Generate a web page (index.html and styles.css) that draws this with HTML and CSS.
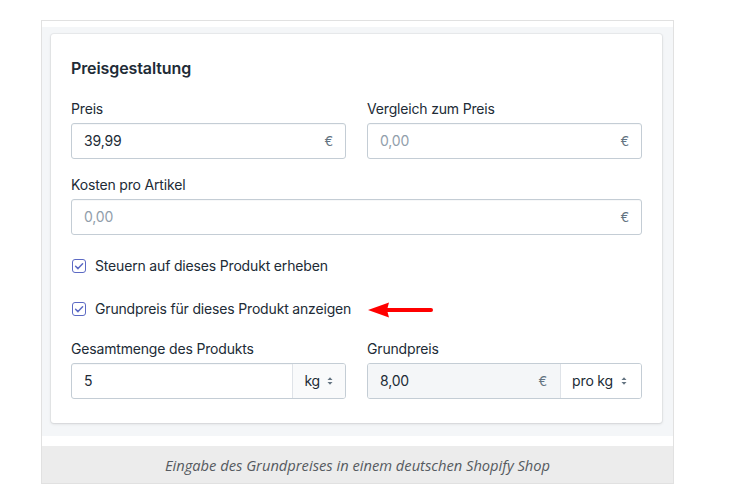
FILE: index.html
```html
<!DOCTYPE html>
<html lang="de">
<head>
<meta charset="utf-8">
<title>Preisgestaltung</title>
<link rel="stylesheet" href="styles.css">
</head>
<body>
<figure class="frame">
  <div class="stage">
    <section class="card">
      <h2 class="card-title">Preisgestaltung</h2>

      <div class="row two">
        <div class="field">
          <label class="label">Preis</label>
          <div class="input">
            <span class="value">39,99</span>
            <span class="suffix">€</span>
          </div>
        </div>
        <div class="field">
          <label class="label">Vergleich zum Preis</label>
          <div class="input">
            <span class="value placeholder">0,00</span>
            <span class="suffix">€</span>
          </div>
        </div>
      </div>

      <div class="row one gap-16">
        <div class="field">
          <label class="label">Kosten pro Artikel</label>
          <div class="input">
            <span class="value placeholder">0,00</span>
            <span class="suffix">€</span>
          </div>
        </div>
      </div>

      <div class="check first">
        <span class="box">
          <svg viewBox="0 0 14 14" width="14" height="14"><path d="M3.6 7.2l2.4 2.4 4.6-4.8" fill="none" stroke="#5c6ac4" stroke-width="1.5" stroke-linecap="round" stroke-linejoin="round"/></svg>
        </span>
        <span class="check-label">Steuern auf dieses Produkt erheben</span>
      </div>

      <div class="check second">
        <span class="box">
          <svg viewBox="0 0 14 14" width="14" height="14"><path d="M3.6 7.2l2.4 2.4 4.6-4.8" fill="none" stroke="#5c6ac4" stroke-width="1.5" stroke-linecap="round" stroke-linejoin="round"/></svg>
        </span>
        <span class="check-label">Grundpreis für dieses Produkt anzeigen</span>
      </div>

      <div class="row two gap-20">
        <div class="field">
          <label class="label">Gesamtmenge des Produkts</label>
          <div class="input joined">
            <span class="value">5</span>
            <span class="select tinted">kg
              <svg class="caret" viewBox="0 0 6 10" width="6" height="10"><path d="M0.5 4L3 1.3 5.5 4z M0.5 6L3 8.7 5.5 6z" fill="#637381"/></svg>
            </span>
          </div>
        </div>
        <div class="field">
          <label class="label">Grundpreis</label>
          <div class="input joined">
            <span class="value grey-part">8,00<span class="suffix">€</span></span>
            <span class="select wide">pro kg
              <svg class="caret" viewBox="0 0 6 10" width="6" height="10"><path d="M0.5 4L3 1.3 5.5 4z M0.5 6L3 8.7 5.5 6z" fill="#637381"/></svg>
            </span>
          </div>
        </div>
      </div>

      <svg class="arrow" viewBox="0 0 66 16" width="66" height="16">
        <line x1="18" y1="8" x2="63" y2="8" stroke="#ff0000" stroke-width="4" stroke-linecap="round"/>
        <polygon points="0,8 21,0.5 19,8 21,15.5" fill="#ff0000"/>
      </svg>
    </section>
  </div>
  <figcaption class="caption">Eingabe des Grundpreises in einem deutschen Shopify Shop</figcaption>
</figure>
</body>
</html>
```

FILE: styles.css
```css
html, body {
  margin: 0;
  padding: 0;
  background: #ffffff;
}

body {
  font-family: Inter, "Noto Sans", "Liberation Sans", sans-serif;
  color: #212b36;
  font-size: 14px;
  line-height: 20px;
  letter-spacing: -0.17px;
}

.frame {
  margin: 20px 0 0 41px;
  width: 633px;
  box-sizing: border-box;
  border: 1px solid #e1e1e1;
  padding-top: 6px;
  background: #ffffff;
}

.stage {
  background: #f4f6f8;
  padding: 7px 11px 13px 9px;
}

.card {
  position: relative;
  background: #ffffff;
  border-radius: 3px;
  box-shadow: 0 0 0 1px rgba(63, 63, 68, 0.05), 0 1px 3px 0 rgba(63, 63, 68, 0.15);
  padding: 22px 20px 24px 20px;
  height: 389px;
  box-sizing: border-box;
}

.card-title {
  margin: 0 0 19px 0;
  font-size: 16px;
  line-height: 24px;
  font-weight: 600;
  letter-spacing: -0.1px;
  color: #212b36;
}

.row {
  display: grid;
  column-gap: 21px;
}

.row.two {
  grid-template-columns: 1fr 1fr;
}

.row.one {
  grid-template-columns: 1fr;
}

.gap-16 {
  margin-top: 16px;
}

.gap-20 {
  margin-top: 20px;
}

.field {
  display: flex;
  flex-direction: column;
}

.label {
  display: block;
  line-height: 20px;
  margin-bottom: 4px;
  color: #212b36;
}

.input {
  height: 36px;
  box-sizing: border-box;
  border: 1px solid #c4cdd5;
  border-radius: 3px;
  box-shadow: inset 0 1px 0 0 rgba(99, 115, 129, 0.05);
  display: flex;
  align-items: center;
  padding: 0 12px 0 12px;
  background: #ffffff;
  overflow: hidden;
}

.input .value {
  flex: 1;
  color: #212b36;
}

.input .value.placeholder {
  color: #919eab;
}

.suffix {
  color: #637381;
  font-size: 13px;
}

.input.joined {
  padding: 0;
}

.input.joined .value {
  padding-left: 12px;
  height: 100%;
  display: flex;
  align-items: center;
}

.grey-part {
  background: #f4f6f8;
  padding-right: 13px;
  justify-content: space-between;
}

.select {
  height: 100%;
  box-sizing: border-box;
  border-left: 1px solid #dfe3e8;
  display: flex;
  align-items: center;
  gap: 7px;
  padding: 0 12px 0 11px;
  color: #212b36;
}

.select.tinted {
  background: #f9fafb;
}

.select.wide {
  padding-left: 11px;
  padding-right: 14px;
  gap: 8px;
  background: #ffffff;
}

.caret {
  display: block;
}

.check {
  display: flex;
  align-items: center;
  height: 20px;
}

.check.first {
  margin-top: 21px;
}

.check.second {
  margin-top: 23px;
}

.box {
  width: 14px;
  height: 14px;
  box-sizing: border-box;
  border: 1px solid #5c6ac4;
  border-radius: 3px;
  margin-left: 1px;
  margin-right: 9px;
  display: flex;
  align-items: center;
  justify-content: center;
  background: #ffffff;
}

.box svg {
  display: block;
  flex: none;
}

.arrow {
  position: absolute;
  left: 317px;
  top: 268px;
}

.caption {
  margin: 10px 0 0 0;
  height: 37px;
  background: #ececec;
  display: flex;
  align-items: center;
  justify-content: center;
  font-family: "Open Sans", "Noto Sans", sans-serif;
  font-style: italic;
  font-size: 14.7px;
  letter-spacing: 0;
  color: #555a60;
}
```
